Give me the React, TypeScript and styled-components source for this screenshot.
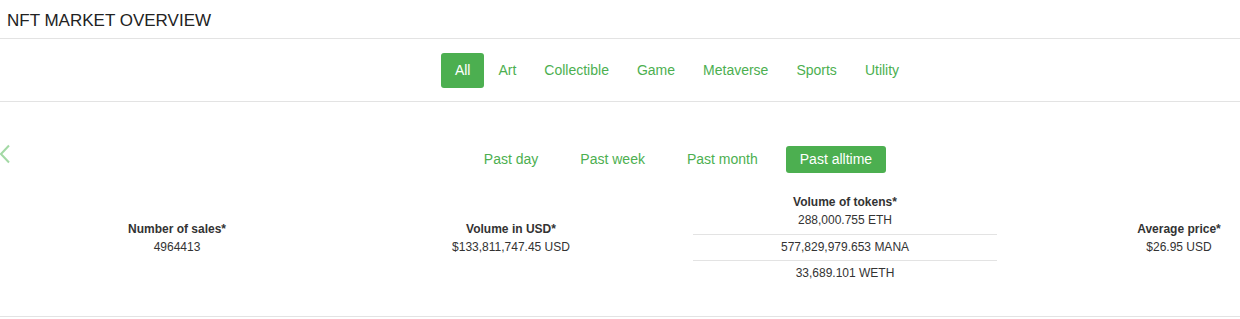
import * as React from "react"
import styled, { createGlobalStyle } from "styled-components"

const GlobalStyle = createGlobalStyle`
  html, body {
    margin: 0;
    padding: 0;
    overflow: hidden;
    background: #fff;
    font-family: "Liberation Sans", Arial, sans-serif;
  }
`

const GREEN = "#4caf50"
const LINE = "#e3e3e3"

const Page = styled.div`
  width: 1354px;
`

const Header = styled.h1`
  margin: 0;
  padding: 11px 7px 8px;
  font-size: 17px;
  line-height: 19px;
  font-weight: 400;
  color: #222;
  border-bottom: 1px solid ${LINE};
`

const CategoryNav = styled.nav`
  display: flex;
  justify-content: center;
  padding: 14px 0 13px;
  border-bottom: 1px solid ${LINE};
`

const Pill = styled.a<{ $active?: boolean; $small?: boolean }>`
  display: block;
  padding: ${p => (p.$small ? "5px 14px" : "9px 14px")};
  font-size: 14px;
  line-height: 17px;
  border-radius: 3px;
  cursor: pointer;
  color: ${p => (p.$active ? "#fff" : GREEN)};
  background: ${p => (p.$active ? GREEN : "transparent")};
`

const Section = styled.section`
  position: relative;
  border-bottom: 1px solid ${LINE};
`

const PrevArrow = styled.div`
  position: absolute;
  left: 0;
  top: 42px;
  width: 10px;
  height: 20px;
`

const Slide = styled.div`
  width: 1336px;
  margin-left: 10px;
  padding: 44px 0 34px;
`

const Periods = styled.div`
  display: flex;
  justify-content: center;
  gap: 14px;
`

const Stats = styled.div`
  display: grid;
  grid-template-columns: repeat(4, 334px);
  align-items: center;
  margin-top: 20px;
`

const Stat = styled.div`
  padding: 0 15px;
  text-align: center;
  font-size: 12px;
  line-height: 18px;
  color: #333;
`

const Label = styled.div`
  font-weight: 700;
`

const TokenRow = styled.div`
  padding: 3px 0 4px;
  & + & {
    border-top: 1px solid ${LINE};
  }
  &:first-child {
    padding: 0 0 5px;
  }
  &:last-child {
    padding-bottom: 0;
  }
`

const categories = ["All", "Art", "Collectible", "Game", "Metaverse", "Sports", "Utility"]
const periods = ["Past day", "Past week", "Past month", "Past alltime"]

export default function App() {
  return (
    <Page>
      <GlobalStyle />
      <Header>NFT MARKET OVERVIEW</Header>
      <CategoryNav>
        {categories.map(c => (
          <Pill key={c} $active={c === "All"}>
            {c}
          </Pill>
        ))}
      </CategoryNav>
      <Section>
        <PrevArrow>
          <svg width="10" height="20" viewBox="0 0 10 20">
            <path d="M9 1.5 L1 10 L9 18.5" fill="none" stroke="#a3d9a5" strokeWidth="2" />
          </svg>
        </PrevArrow>
        <Slide>
          <Periods>
            {periods.map(p => (
              <Pill key={p} $small $active={p === "Past alltime"}>
                {p}
              </Pill>
            ))}
          </Periods>
          <Stats>
            <Stat>
              <Label>Number of sales*</Label>
              <div>4964413</div>
            </Stat>
            <Stat>
              <Label>Volume in USD*</Label>
              <div>$133,811,747.45 USD</div>
            </Stat>
            <Stat>
              <Label>Volume of tokens*</Label>
              <div>
                <TokenRow>288,000.755 ETH</TokenRow>
                <TokenRow>577,829,979.653 MANA</TokenRow>
                <TokenRow>33,689.101 WETH</TokenRow>
              </div>
            </Stat>
            <Stat>
              <Label>Average price*</Label>
              <div>$26.95 USD</div>
            </Stat>
          </Stats>
        </Slide>
      </Section>
    </Page>
  )
}
